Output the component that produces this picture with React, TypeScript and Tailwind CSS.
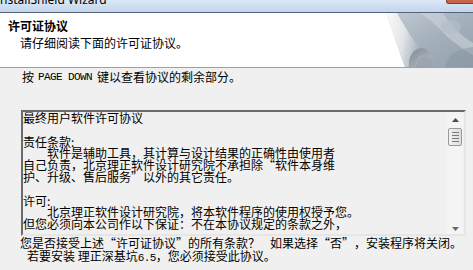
import React from 'react';

const PageCurl: React.FC = () => (
  <svg width="88" height="54" viewBox="0 0 88 54" className="shrink-0 block">
    <defs>
      <linearGradient id="curlBg" x1="0" y1="0" x2="1" y2="1">
        <stop offset="0" stopColor="#c3ccd5" />
        <stop offset="0.5" stopColor="#a4b0bc" />
        <stop offset="1" stopColor="#93a1ae" />
      </linearGradient>
      <linearGradient id="curlStrip" x1="0" y1="0" x2="1" y2="0.3">
        <stop offset="0" stopColor="#fbfbfb" />
        <stop offset="0.55" stopColor="#e2e5e8" />
        <stop offset="1" stopColor="#a9b2bb" />
      </linearGradient>
      <linearGradient id="curlRoll" x1="0" y1="0" x2="1" y2="1">
        <stop offset="0" stopColor="#7f8a95" />
        <stop offset="1" stopColor="#b8c0c8" />
      </linearGradient>
    </defs>
    <rect width="88" height="54" fill="url(#curlBg)" />
    {/* soft swirls in the background */}
    <path d="M34 0 C50 8, 58 22, 70 30 C78 36, 84 40, 88 42 L88 30 C78 24, 66 14, 58 0 Z" fill="#cdd4db" opacity="0.6" />
    <path d="M60 54 C62 44, 70 36, 88 34 L88 54 Z" fill="#8796a4" opacity="0.5" />
    <ellipse cx="66" cy="14" rx="10" ry="7" fill="#b3bec9" opacity="0.7" />
    {/* white page */}
    <polygon points="0,0 1,0 20,54 0,54" fill="#ffffff" />
    {/* curled back of the page */}
    <path d="M1 0 L12 0 C20 14, 28 28, 38 38 L30 54 L20 54 C14 36, 7 18, 1 0 Z" fill="url(#curlStrip)" />
    {/* roll */}
    <path d="M24 54 C23 44, 28 36, 36 35 C42 35, 47 40, 48 46 C44 42, 38 41, 34 44 C31 47, 31 51, 32 54 Z" fill="url(#curlRoll)" />
    <path d="M32 54 C31 50, 33 45, 38 44 C42 44, 46 47, 47 50 L47 54 Z" fill="#9aa5b0" />
  </svg>
);

const ArrowUp = () => (
  <svg width="7" height="4" viewBox="0 0 7 4"><polygon points="3.5,0 7,4 0,4" fill="#4a4a4a" /></svg>
);
const ArrowDown = () => (
  <svg width="7" height="4" viewBox="0 0 7 4"><polygon points="0,0 7,0 3.5,4" fill="#6a6a6a" /></svg>
);

const Mono: React.FC<{ children: React.ReactNode; className?: string }> = ({ children, className }) => (
  <span className={`font-['Liberation_Mono',monospace] text-[11px] tracking-[-0.6px] ${className ?? ''}`}>{children}</span>
);

// full-width quote cells, as the SimSun dialog font draws them
const LQ = () => <span className="inline-block w-[12px] text-right">“</span>;
const RQ = () => <span className="inline-block w-[12px] text-left">”</span>;

export default function App() {
  return (
    <div className="w-[473px] h-[270px] overflow-hidden bg-[#f0f0f0] text-black text-[12px] font-['Noto_Sans_CJK_SC',sans-serif]">
      {/* Title bar */}
      <div className="h-[13px] flex items-start overflow-hidden bg-gradient-to-b from-[#dce8f6] to-[#c2d5ec] border-b border-[#55647a]">
        <span className="font-['Noto_Sans',sans-serif] text-[12px] leading-[12px] -mt-[6px] -ml-[4px] whitespace-nowrap">
          InstallShield Wizard
        </span>
        <div className="ml-auto w-[27px] h-[4px] bg-[#c8654d] border-b border-l border-[#8c3c2c] rounded-bl-[3px]" />
      </div>

      {/* Header */}
      <div className="h-[55px] bg-white border-b border-[#a0a0a0] flex">
        <div className="flex-1 pl-[8px] pt-[7px]">
          <div className="font-bold leading-[12px]">许可证协议</div>
          <div className="leading-[12px] mt-[5px] pl-[12px]">请仔细阅读下面的许可证协议。</div>
        </div>
        <PageCurl />
      </div>

      {/* Body */}
      <div className="pt-[3px] pl-[22px] leading-[12px] flex items-center whitespace-nowrap">
        <span>按</span>
        <Mono className="ml-[4px]">PAGE DOWN</Mono>
        <span className="ml-[5px]">键以查看协议的剩余部分。</span>
      </div>

      <div className="mt-[27px] ml-[21px] w-[445px] h-[126px] flex border-2 border-t-[#6b6b6b] border-l-[#6b6b6b] border-r-[#e6e6e6] border-b-[#e6e6e6]">
        <div className="flex-1 leading-[11.8px] whitespace-nowrap">
          <div>最终用户软件许可协议</div>
          <div>&nbsp;</div>
          <div>责任条款:</div>
          <div className="pl-[24px]">软件是辅助工具，其计算与设计结果的正确性由使用者</div>
          <div>自己负责，北京理正软件设计研究院不承担除<LQ />软件本身维</div>
          <div>护、升级、售后服务<RQ />以外的其它责任。</div>
          <div>&nbsp;</div>
          <div>许可:</div>
          <div className="pl-[24px]">北京理正软件设计研究院，将本软件程序的使用权授予您。</div>
          <div>但您必须向本公司作以下保证：不在本协议规定的条款之外，</div>
        </div>
        <div className="w-[16px] mr-[1px] flex flex-col bg-[#f4f4f4]">
          <div className="h-[16px] flex items-center justify-center">
            <ArrowUp />
          </div>
          <div className="mx-[1px] h-[18px] rounded-[2px] border border-[#9a9a9a] bg-gradient-to-r from-[#f2f2f2] to-[#dedede] flex flex-col items-center justify-center gap-[2px]">
            <div className="w-[7px] h-px bg-[#7a7a7a]" />
            <div className="w-[7px] h-px bg-[#7a7a7a]" />
            <div className="w-[7px] h-px bg-[#7a7a7a]" />
            <div className="w-[7px] h-px bg-[#7a7a7a]" />
          </div>
          <div className="flex-1" />
          <div className="h-[16px] flex items-end justify-center pb-[3px]">
            <ArrowDown />
          </div>
        </div>
      </div>

      <div className="pl-[20px] leading-[13px] whitespace-nowrap">
        <div>
          您是否接受上述<LQ />许可证协议<RQ />的所有条款？<span className="inline-block w-[10px]" />如果选择<LQ />否<RQ />，安装程序将关闭。
        </div>
        <div className="pl-[7px]">
          若要安装 理正深基坑<Mono>6.5</Mono>，您必须接受此协议。
        </div>
      </div>
    </div>
  );
}
